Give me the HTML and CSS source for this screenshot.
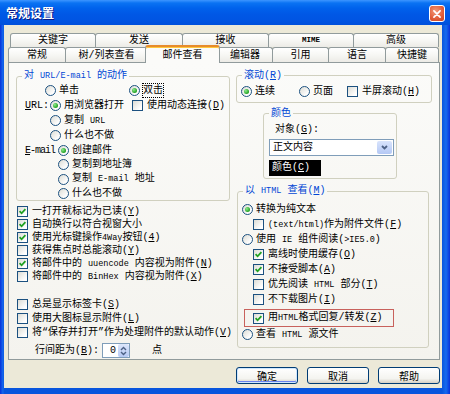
FILE: index.html
```html
<!DOCTYPE html>
<html lang="zh-CN">
<head>
  <meta charset="UTF-8">
  <title>常规设置</title>
  <link rel="stylesheet" href="styles.css">
</head>
<body>
  <div class="window">
    <div class="titlebar">
      <span class="title">常规设置</span>
      <span class="close"><svg viewBox="0 0 16 16"><path d="M4.5 4.5 L11.5 11.5 M11.5 4.5 L4.5 11.5"/></svg></span>
    </div>

    <div class="client">
      <div class="tabs">
        <div class="tab-row back">
          <span class="tab t-kw">关键字</span>
          <span class="tab t-send">发送</span>
          <span class="tab t-recv">接收</span>
          <span class="tab t-mime"><span class="mime">MIME</span></span>
          <span class="tab t-adv">高级</span>
        </div>
        <div class="tab-row front">
          <span class="tab t-gen">常规</span>
          <span class="tab t-tree">树/列表查看</span>
          <span class="tab t-mail active">邮件查看</span>
          <span class="tab t-edit">编辑器</span>
          <span class="tab t-quote">引用</span>
          <span class="tab t-lang">语言</span>
          <span class="tab t-keys">快捷键</span>
        </div>
      </div>

      <div class="panel">
        <!-- left column -->
        <div class="col">
          <fieldset class="group g-url">
            <legend>对 <span class="en">URL/E-mail</span> 的动作</legend>
            <div class="row r-click">
              <span class="opt w-click"><i class="rb"></i><span>单击</span></span>
              <span class="opt"><i class="rb on"></i><span class="focus">双击</span></span>
            </div>
            <div class="row r-lbl">
              <span class="lbl"><u>U</u>RL:</span>
              <span class="opt w-browser"><i class="rb on"></i><span>用浏览器打开</span></span>
              <span class="opt"><i class="cb"></i><span>使用动态连接(<u>D</u>)</span></span>
            </div>
            <div class="row r-url"><i class="rb"></i><span>复制 <span class="en">URL</span></span></div>
            <div class="row r-url"><i class="rb"></i><span>什么也不做</span></div>
            <div class="row r-lbl r-mail">
              <span class="lbl lbl-mail"><u>E</u>-mail</span>
              <span class="opt"><i class="rb on"></i><span>创建邮件</span></span>
            </div>
            <div class="row r-sub r-mail"><i class="rb"></i><span>复制到地址簿</span></div>
            <div class="row r-sub r-mail"><i class="rb"></i><span>复制 <span class="en">E-mail</span> 地址</span></div>
            <div class="row r-sub r-mail"><i class="rb"></i><span>什么也不做</span></div>
          </fieldset>

          <div class="list first">
            <div class="row r-chk"><i class="cb on"><svg viewBox="0 0 9 9"><path d="M1.6 4.2 L3.6 6.3 L7.4 2.2"/></svg></i><span>一打开就标记为已读(<u>Y</u>)</span></div>
            <div class="row r-chk"><i class="cb on"><svg viewBox="0 0 9 9"><path d="M1.6 4.2 L3.6 6.3 L7.4 2.2"/></svg></i><span>自动换行以符合视窗大小</span></div>
            <div class="row r-chk"><i class="cb on"><svg viewBox="0 0 9 9"><path d="M1.6 4.2 L3.6 6.3 L7.4 2.2"/></svg></i><span>使用光标键操作<span class="en">4Way</span>按钮(<u>4</u>)</span></div>
            <div class="row r-chk"><i class="cb"></i><span>获得焦点时总能滚动(<u>Y</u>)</span></div>
            <div class="row r-chk"><i class="cb on"><svg viewBox="0 0 9 9"><path d="M1.6 4.2 L3.6 6.3 L7.4 2.2"/></svg></i><span>将邮件中的 <span class="en">uuencode</span> 内容视为附件(<u>N</u>)</span></div>
            <div class="row r-chk"><i class="cb"></i><span>将邮件中的 <span class="en">BinHex</span> 内容视为附件(<u>X</u>)</span></div>
          </div>

          <div class="list second">
            <div class="row r-chk2"><i class="cb"></i><span>总是显示标签卡(<u>S</u>)</span></div>
            <div class="row r-chk2"><i class="cb"></i><span>使用大图标显示附件(<u>L</u>)</span></div>
            <div class="row r-chk2"><i class="cb"></i><span>将“保存并打开”作为处理附件的默认动作(<u>V</u>)</span></div>
          </div>

          <div class="row r-spin">
            <span>行间距为(<u>B</u>):</span>
            <span class="spin">
              <span class="spin-val">0</span>
              <span class="spin-btn">
                <svg viewBox="0 0 9 12"><path d="M2 5 L4.5 2.5 L7 5 M2 7 L4.5 9.5 L7 7"/></svg>
              </span>
            </span>
            <span class="unit">点</span>
          </div>
        </div>

        <!-- right column -->
        <div class="col">
          <fieldset class="group g-scroll">
            <legend>滚动(<u>R</u>)</legend>
            <div class="row r-scroll">
              <span class="opt w-cont"><i class="rb on"></i><span>连续</span></span>
              <span class="opt w-page"><i class="rb"></i><span>页面</span></span>
              <span class="opt"><i class="cb"></i><span>半屏滚动(<u>H</u>)</span></span>
            </div>
          </fieldset>

          <fieldset class="group g-color">
            <legend>颜色</legend>
            <div class="row r-obj">对象(<u>G</u>):</div>
            <div class="select">
              <span class="select-val">正文内容</span>
              <span class="drop"><svg viewBox="0 0 9 9"><path d="M2 3 L4.5 5.5 L7 3"/></svg></span>
            </div>
            <div class="color-btn">颜色(<u>C</u>)</div>
          </fieldset>

          <fieldset class="group g-html">
            <legend>以 <span class="en">HTML</span> 查看(<u>M</u>)</legend>
            <div class="row r-top first"><i class="rb on"></i><span>转换为纯文本</span></div>
            <div class="row r-in"><i class="cb"></i><span><span class="en">(text/html)</span>作为附件文件(<u>F</u>)</span></div>
            <div class="row r-top"><i class="rb"></i><span>使用 <span class="en">IE</span> 组件阅读(<span class="en">&gt;IE5.0</span>)</span></div>
            <div class="row r-in"><i class="cb on"><svg viewBox="0 0 9 9"><path d="M1.6 4.2 L3.6 6.3 L7.4 2.2"/></svg></i><span>离线时使用缓存(<u>O</u>)</span></div>
            <div class="row r-in"><i class="cb on"><svg viewBox="0 0 9 9"><path d="M1.6 4.2 L3.6 6.3 L7.4 2.2"/></svg></i><span>不接受脚本(<u>A</u>)</span></div>
            <div class="row r-in"><i class="cb"></i><span>优先阅读 <span class="en">HTML</span> 部分(<u>T</u>)</span></div>
            <div class="row r-in"><i class="cb"></i><span>不下载图片(<u>I</u>)</span></div>
            <div class="row r-mark"><i class="cb on"><svg viewBox="0 0 9 9"><path d="M1.6 4.2 L3.6 6.3 L7.4 2.2"/></svg></i><span>用<span class="en">HTML</span>格式回复/转发(<u>Z</u>)</span></div>
            <div class="row r-top"><i class="rb"></i><span>查看 <span class="en">HTML</span> 源文件</span></div>
          </fieldset>
        </div>
      </div>

      <div class="buttons">
        <button class="btn default">确定</button>
        <button class="btn">取消</button>
        <button class="btn">帮助</button>
      </div>
    </div>
  </div>
</body>
</html>
```

FILE: styles.css
```css
* {
  margin: 0;
  padding: 0;
  box-sizing: border-box;
}
body {
  width: 450px;
  height: 394px;
  overflow: hidden;
  font-family: "Liberation Mono", "Noto Sans CJK SC", monospace;
  font-size: 10px;
  line-height: 13px;
  color: #000;
  background: #0842D8;
}
u {
  text-decoration: underline;
}
.en {
  font-size: 8.5px;
}
.window {
  width: 450px;
  height: 394px;
  display: flex;
  flex-direction: column;
  background: linear-gradient(90deg, #0831D9, #166AEE 3px, #0855DD 4px, #0855DD 442px, #166AEE 446px, #0831D9);
}
.titlebar {
  height: 25px;
  display: flex;
  align-items: center;
  justify-content: space-between;
  padding: 0 5px 0 6px;
  background: linear-gradient(#3D95FF 0, #0A73F3 3px, #0062EC 8px, #0058E6 14px, #0055E3 20px, #0050DB 25px);
}
.title {
  font-family: "Noto Sans CJK SC", sans-serif;
  font-weight: bold;
  font-size: 12px;
  color: #fff;
  text-shadow: 1px 1px 0 #0A1883;
}
.close {
  width: 16px;
  height: 17px;
  margin-top: 2px;
  border: 1px solid #fff;
  border-radius: 3px;
  background: radial-gradient(circle at 40% 35%, #F29A7A, #E2603C 55%, #C9411E);
  display: flex;
  align-items: center;
  justify-content: center;
}
.close svg {
  width: 14px;
  height: 14px;
  stroke: #fff;
  stroke-width: 2;
  stroke-linecap: round;
}
.client {
  flex: 1;
  margin: 0 8px 6px 4px;
  background: #ECE9D8;
  padding: 8px 2px 0 4px;
  display: flex;
  flex-direction: column;
}

/* tabs */
.tab-row {
  display: flex;
  align-items: flex-end;
}
.tab-row.back {
  height: 14px;
  padding-left: 2px;
}
.tab-row.front {
  height: 15px;
  position: relative;
  z-index: 1;
}
.tab {
  height: 100%;
  display: flex;
  align-items: center;
  justify-content: center;
  border: 1px solid #919B9C;
  border-bottom: none;
  border-radius: 3px 3px 0 0;
  background: linear-gradient(#FFFFFF, #F7F7F4 50%, #ECEBE6);
  margin-left: -1px;
  white-space: nowrap;
}
.tab:first-child {
  margin-left: 0;
}
.mime {
  font-size: 7.5px;
  font-weight: bold;
}
.t-kw { width: 86px; }
.t-send { width: 88px; }
.t-recv { width: 87px; }
.t-mime { width: 86px; }
.t-adv { width: 86px; }
.t-gen { width: 58px; }
.t-tree { width: 83px; }
.t-edit { width: 56px; }
.t-quote { width: 57px; }
.t-lang { width: 58px; }
.t-keys { width: 54px; }
.tab.active {
  width: 75px;
  height: 18px;
  margin: 0 -2px -1px -3px;
  background: #FBFBF9;
  border-top: 2px solid #E68B2C;
  box-shadow: inset 0 1px 0 #FFC83C;
  position: relative;
  z-index: 2;
}

/* panel */
.panel {
  width: 432px;
  height: 298px;
  border: 1px solid #919B9C;
  background: linear-gradient(#FBFBF9, #F4F3EE);
  padding: 6px 7px;
  display: grid;
  grid-template-columns: 214px 196px;
  column-gap: 6px;
}
.col {
  display: flex;
  flex-direction: column;
  min-width: 0;
}
.group {
  border: 1px solid #D0D0BF;
  border-radius: 3px;
  min-width: 0;
  padding: 0;
}
.group legend {
  color: #0046D5;
  line-height: 13px;
  padding: 0 2px;
  margin-left: 5px;
}
.row {
  display: flex;
  align-items: center;
  white-space: nowrap;
  height: 15px;
}
.opt {
  display: flex;
  align-items: center;
}
.rb,
.cb {
  flex: none;
  width: 11px;
  height: 11px;
  border: 1px solid #1C5180;
  margin-right: 3px;
  display: flex;
  align-items: center;
  justify-content: center;
}
.rb {
  border-radius: 50%;
  background: linear-gradient(135deg, #DCDCD5, #FFFFFF 80%);
}
.rb.on::after {
  content: "";
  width: 5px;
  height: 5px;
  border-radius: 50%;
  background: radial-gradient(circle at 35% 35%, #8EEB8E, #21A121 70%);
}
.cb {
  margin-right: 4px;
  background: linear-gradient(135deg, #DCDCD5, #FFFFFF 80%);
}
.cb svg {
  width: 9px;
  height: 9px;
  fill: none;
  stroke: #21A121;
  stroke-width: 1.8;
}
.focus {
  outline: 1px dotted #000;
  outline-offset: 0;
}

/* url group */
.g-url {
  height: 132px;
}
.r-click {
  padding-left: 28px;
}
.w-click { width: 84px; }
.r-lbl {
  padding-left: 8px;
}
.lbl {
  width: 25px;
}
.lbl-mail {
  width: 33px;
  letter-spacing: -1px;
}
.w-browser { width: 82px; }
.r-url {
  padding-left: 33px;
}
.r-mail {
  height: 14.5px;
}
.r-sub {
  padding-left: 41px;
}

/* lists */
.list.first {
  margin-top: 4px;
}
.r-chk {
  height: 13px;
  padding-left: 1px;
}
.list.second {
  margin-top: 14px;
}
.r-chk2 {
  height: 14px;
  padding-left: 1px;
}
.r-spin {
  margin-top: 4px;
  padding-left: 19px;
}
.spin {
  width: 28px;
  height: 15px;
  margin-left: 3px;
  border: 1px solid #7F9DB9;
  background: #fff;
  display: flex;
}
.spin-val {
  flex: 1;
  text-align: right;
  padding-right: 2px;
}
.spin-btn {
  width: 11px;
  background: linear-gradient(#DCE6FB, #B6C9F3);
  border-radius: 2px;
  display: flex;
  align-items: center;
  justify-content: center;
}
.spin-btn svg {
  width: 9px;
  height: 12px;
  fill: none;
  stroke: #4D6185;
  stroke-width: 1.4;
}
.unit {
  margin-left: 22px;
}

/* right column */
.g-scroll {
  height: 34px;
}
.r-scroll {
  margin-top: 2px;
  height: 14px;
  padding-left: 4px;
}
.w-cont { width: 58px; }
.w-page { width: 48px; }
.g-color {
  margin: 4px 0 0 27px;
  width: 134px;
  height: 72px;
}
.r-obj {
  height: 13px;
  margin-top: 3px;
  padding-left: 11px;
}
.select {
  width: 125px;
  height: 17px;
  margin: 3px 0 0 5px;
  border: 1px solid #7F9DB9;
  background: #fff;
  display: flex;
}
.select-val {
  flex: 1;
  padding-left: 3px;
  line-height: 15px;
}
.drop {
  width: 15px;
  margin: 1px;
  border-radius: 2px;
  background: linear-gradient(#D9E4FC, #B4C8F5);
  display: flex;
  align-items: center;
  justify-content: center;
}
.drop svg {
  width: 9px;
  height: 9px;
  fill: none;
  stroke: #4D6185;
  stroke-width: 1.8;
}
.color-btn {
  width: 52px;
  height: 16px;
  margin: 4px 0 0 5px;
  background: #000;
  color: #fff;
  line-height: 16px;
  padding-left: 3px;
}
.g-html {
  margin: 5px 3px 0 1px;
  height: 164px;
}
.r-top {
  padding-left: 4px;
}
.r-top.first {
  margin-top: 4px;
}
.r-in {
  padding-left: 15px;
}
.r-mark {
  width: 150px;
  height: 18px;
  margin: 2px 0 0 6px;
  border: 1px solid #C8615C;
  padding-left: 8px;
}

/* buttons */
.buttons {
  margin-top: 7px;
  display: flex;
  justify-content: flex-end;
  gap: 9px;
}
.btn {
  width: 62px;
  height: 17px;
  font-family: "Noto Sans CJK SC", sans-serif;
  font-size: 10px;
  line-height: 13px;
  color: #000;
  border: 1px solid #003C74;
  border-radius: 3px;
  background: linear-gradient(#FFFFFF, #F4F4F0 70%, #D6D0C5);
}
.btn.default {
  box-shadow: inset 0 0 0 1px #CEE7FF, inset 0 -1px 0 1px #6982EE;
}
```
